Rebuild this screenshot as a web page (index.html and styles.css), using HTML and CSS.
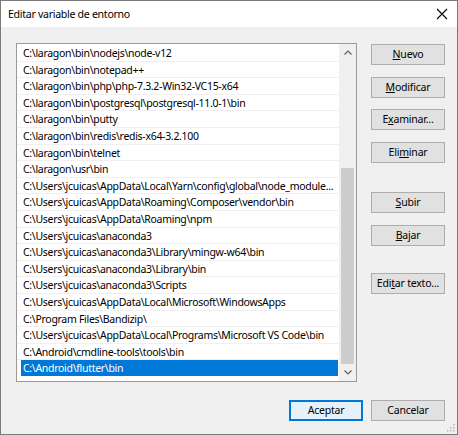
FILE: index.html
```html
<!DOCTYPE html>
<html lang="es">
<head>
<meta charset="utf-8">
<title>Editar variable de entorno</title>
<link rel="stylesheet" href="styles.css">
</head>
<body>
<div class="window">
  <div class="titlebar">
    <span class="title">Editar variable de entorno</span>
    <svg class="close" width="12" height="12" viewBox="0 0 12 12"><path d="M1 1 L11 11 M11 1 L1 11" stroke="#000" stroke-width="1.1" fill="none"/></svg>
  </div>
  <div class="body">
    <div class="main">
      <div class="listbox">
        <div class="rows">
          <div class="row"><span class="cell">C:\laragon\bin\nodejs\node-v12</span></div>
          <div class="row"><span class="cell">C:\laragon\bin\notepad++</span></div>
          <div class="row"><span class="cell">C:\laragon\bin\php\php-7.3.2-Win32-VC15-x64</span></div>
          <div class="row"><span class="cell">C:\laragon\bin\postgresql\postgresql-11.0-1\bin</span></div>
          <div class="row"><span class="cell">C:\laragon\bin\putty</span></div>
          <div class="row"><span class="cell">C:\laragon\bin\redis\redis-x64-3.2.100</span></div>
          <div class="row"><span class="cell">C:\laragon\bin\telnet</span></div>
          <div class="row"><span class="cell">C:\laragon\usr\bin</span></div>
          <div class="row"><span class="cell">C:\Users\jcuicas\AppData\Local\Yarn\config\global\node_module...</span></div>
          <div class="row"><span class="cell">C:\Users\jcuicas\AppData\Roaming\Composer\vendor\bin</span></div>
          <div class="row"><span class="cell">C:\Users\jcuicas\AppData\Roaming\npm</span></div>
          <div class="row"><span class="cell">C:\Users\jcuicas\anaconda3</span></div>
          <div class="row"><span class="cell">C:\Users\jcuicas\anaconda3\Library\mingw-w64\bin</span></div>
          <div class="row"><span class="cell">C:\Users\jcuicas\anaconda3\Library\bin</span></div>
          <div class="row"><span class="cell">C:\Users\jcuicas\anaconda3\Scripts</span></div>
          <div class="row"><span class="cell">C:\Users\jcuicas\AppData\Local\Microsoft\WindowsApps</span></div>
          <div class="row"><span class="cell">C:\Program Files\Bandizip\</span></div>
          <div class="row"><span class="cell">C:\Users\jcuicas\AppData\Local\Programs\Microsoft VS Code\bin</span></div>
          <div class="row"><span class="cell">C:\Android\cmdline-tools\tools\bin</span></div>
          <div class="row selected"><span class="cell">C:\Android\flutter\bin</span></div>
        </div>
        <div class="scrollbar">
          <div class="arrow">
            <svg width="8" height="5" viewBox="0 0 8 5"><path d="M0.5 4.5 L4 1 L7.5 4.5" stroke="#606060" stroke-width="1.2" fill="none"/></svg>
          </div>
          <div class="track"><div class="thumb"></div></div>
          <div class="arrow">
            <svg width="8" height="5" viewBox="0 0 8 5"><path d="M0.5 0.5 L4 4 L7.5 0.5" stroke="#606060" stroke-width="1.2" fill="none"/></svg>
          </div>
        </div>
      </div>
      <div class="side">
        <div class="group">
          <button class="btn"><u>N</u>uevo</button>
          <button class="btn"><u>M</u>odificar</button>
          <button class="btn">E<u>x</u>aminar...</button>
          <button class="btn">Eli<u>m</u>inar</button>
        </div>
        <div class="group move">
          <button class="btn"><u>S</u>ubir</button>
          <button class="btn"><u>B</u>ajar</button>
        </div>
        <div class="group edit">
          <button class="btn">Edi<u>t</u>ar texto...</button>
        </div>
      </div>
    </div>
    <div class="footer">
      <button class="btn default">Aceptar</button>
      <button class="btn">Cancelar</button>
    </div>
    <svg class="grip" width="8" height="8" viewBox="0 0 8 8">
      <rect x="6" y="0" width="1.5" height="1.5" fill="#b8b8b8"/>
      <rect x="3" y="3" width="1.5" height="1.5" fill="#b8b8b8"/>
      <rect x="6" y="3" width="1.5" height="1.5" fill="#b8b8b8"/>
      <rect x="0" y="6" width="1.5" height="1.5" fill="#b8b8b8"/>
      <rect x="3" y="6" width="1.5" height="1.5" fill="#b8b8b8"/>
      <rect x="6" y="6" width="1.5" height="1.5" fill="#b8b8b8"/>
    </svg>
  </div>
</div>
</body>
</html>
```

FILE: styles.css
```css
* { box-sizing: border-box; }
html, body { margin: 0; padding: 0; background: #f0f0f0; }
body {
  font-family: "Noto Sans", "Open Sans", "DejaVu Sans", sans-serif;
  font-size: 10.5px;
  letter-spacing: -0.3px;
  color: #000;
}
.window {
  width: 458px;
  height: 435px;
  border: 1px solid #7a7a7a;
  background: #f0f0f0;
  display: flex;
  flex-direction: column;
}
.titlebar {
  height: 26px;
  background: #fff;
  display: flex;
  align-items: center;
  justify-content: space-between;
  padding: 0 9px 0 7px;
  flex: none;
}
.title { font-size: 10.6px; letter-spacing: -0.3px; }
.close { display: block; }
.body {
  flex: 1;
  position: relative;
  padding: 16px 12px 0 15px;
  display: flex;
  flex-direction: column;
}
.main { display: flex; gap: 14px; }
.listbox {
  width: 341px;
  height: 339px;
  border: 1px solid #9a9a9a;
  background: #fff;
  display: flex;
}
.rows {
  flex: 1;
  padding-top: 1px;
  overflow: hidden;
}
.row {
  height: 16.6px;
  border-bottom: 1px solid #f0f0f0;
  padding-left: 4px;
  padding-right: 1px;
  display: flex;
}
.cell {
  flex: 1;
  padding-left: 2px;
  line-height: 16px;
  white-space: nowrap;
  overflow: hidden;
}
.row.selected { border-bottom-color: transparent; }
.row.selected .cell { background: #0078d7; color: #fff; }
.scrollbar {
  width: 17px;
  background: #f0f0f0;
  display: flex;
  flex-direction: column;
}
.arrow {
  height: 17px;
  display: flex;
  align-items: center;
  justify-content: center;
  flex: none;
}
.track { flex: 1; display: flex; flex-direction: column; justify-content: flex-end; padding: 0 2px; }
.thumb { height: 196px; background: #cdcdcd; }
.side {
  width: 74px;
  padding-top: 1px;
  display: flex;
  flex-direction: column;
}
.group { display: flex; flex-direction: column; gap: 11.7px; }
.group.move { margin-top: 29px; }
.group.edit { margin-top: 27px; }
.btn {
  width: 74px;
  height: 21px;
  border: 1px solid #adadad;
  background: #e1e1e1;
  font-family: inherit;
  font-size: 10.5px;
  letter-spacing: -0.2px;
  color: #000;
  padding: 0;
  line-height: 19px;
  text-align: center;
}
.btn u { text-decoration-thickness: 1px; text-underline-offset: 1px; }
.btn.default {
  border: 1px solid #0078d7;
  box-shadow: inset 0 0 0 1px #0078d7;
  background: #e5f1fb;
}
.footer {
  display: flex;
  justify-content: flex-end;
  gap: 8px;
  margin-top: 18px;
  padding-right: 0;
}
.grip { position: absolute; right: 2px; bottom: 2px; }
```
